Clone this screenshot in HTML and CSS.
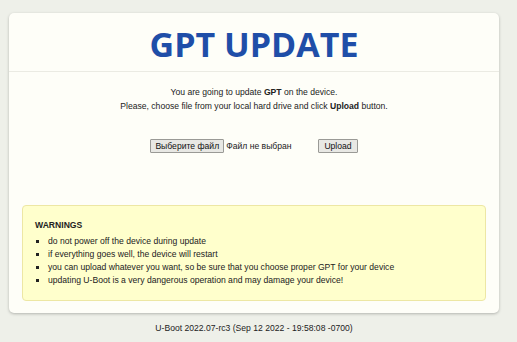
FILE: index.html
```html
<!DOCTYPE html>
<html lang="en">
<head>
    <meta charset="UTF-8">
    <title>GPT UPDATE</title>
    <link rel="stylesheet" href="styles.css">
</head>
<body>

<div class="card">
    <div class="card-head">
        <h1>GPT UPDATE</h1>
    </div>

    <div class="card-body">
        <p class="intro">You are going to update <b>GPT</b> on the device.<br>
        Please, choose file from your local hard drive and click <b>Upload</b> button.</p>

        <form class="upload" onsubmit="return false">
            <span class="file-pick">
                <span class="btn">Выберите файл</span>
                <span class="file-name">Файл не выбран</span>
            </span>
            <button class="btn" type="submit">Upload</button>
        </form>

        <div class="warnings">
            <strong>WARNINGS</strong>
            <ul>
                <li>do not power off the device during update</li>
                <li>if everything goes well, the device will restart</li>
                <li>you can upload whatever you want, so be sure that you choose proper GPT for your device</li>
                <li>updating U-Boot is a very dangerous operation and may damage your device!</li>
            </ul>
        </div>
    </div>
</div>

<div class="footer">U-Boot 2022.07-rc3 (Sep 12 2022 - 19:58:08 -0700)</div>

</body>
</html>
```

FILE: styles.css
```css
body {
    margin: 0;
    padding: 13px 18px 0 9px;
    font-family: 'Liberation Sans', Arial, sans-serif;
    font-size: 8.6px;
    color: #222;
    background-color: #eef0e9;
}

.card {
    background-color: #fefef8;
    border-radius: 5px;
    box-shadow: 0 1px 3px rgba(0, 0, 0, 0.25);
}

.card-head {
    height: 58px;
    border-bottom: 1px solid #ebebe3;
    display: flex;
    justify-content: center;
    align-items: center;
}

h1 {
    margin: 0;
    padding-top: 3px;
    font-family: 'Open Sans', sans-serif;
    font-weight: 700;
    font-size: 34px;
    color: #1f4ea8;
}

.card-body {
    padding: 13px 13px 12px;
}

.intro {
    margin: 0;
    text-align: center;
    line-height: 14px;
}

.upload {
    display: flex;
    justify-content: center;
    align-items: center;
    margin: 25px 0 0;
    height: 16px;
}

.file-pick {
    display: flex;
    align-items: center;
    width: 168px;
}

.file-name {
    margin-left: 2px;
}

.btn {
    box-sizing: border-box;
    height: 14px;
    padding: 0 4px;
    font-family: inherit;
    font-size: 8.6px;
    line-height: 12px;
    white-space: nowrap;
    color: #111;
    background-color: #e8e8e4;
    border: 1px solid #9a9a96;
    border-radius: 1px;
}

button.btn {
    padding: 0 5px;
}

.warnings {
    margin-top: 51px;
    padding: 12px 12px 13px;
    background-color: #ffffcc;
    border: 1px solid #ede7a4;
    border-radius: 4px;
}

.warnings strong {
    display: block;
    line-height: 14px;
}

.warnings ul {
    margin: 3px 0 0;
    padding-left: 13px;
    list-style: square;
}

.warnings li {
    line-height: 13px;
}

.footer {
    margin-top: 9px;
    text-align: center;
    line-height: 13px;
}
```
